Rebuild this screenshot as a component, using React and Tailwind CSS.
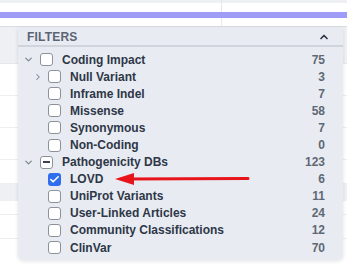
import { ChevronDown, ChevronRight, ChevronUp, Check } from "lucide-react";

const rows = [
  { label: "Coding Impact", count: 75, level: 0, caret: "down" },
  { label: "Null Variant", count: 3, level: 1, caret: "right" },
  { label: "Inframe Indel", count: 7, level: 1 },
  { label: "Missense", count: 58, level: 1 },
  { label: "Synonymous", count: 7, level: 1 },
  { label: "Non-Coding", count: 0, level: 1 },
  { label: "Pathogenicity DBs", count: 123, level: 0, caret: "down", state: "mixed" },
  { label: "LOVD", count: 6, level: 1, state: "checked" },
  { label: "UniProt Variants", count: 11, level: 1 },
  { label: "User-Linked Articles", count: 24, level: 1 },
  { label: "Community Classifications", count: 12, level: 1 },
  { label: "ClinVar", count: 70, level: 1 },
];

const Box = ({ state }) => {
  if (state === "checked")
    return (
      <span className="w-[13px] h-[13px] rounded-[3px] bg-[#2f6fed] flex items-center justify-center">
        <Check className="w-[11px] h-[11px] text-white" strokeWidth={3.5} />
      </span>
    );
  return (
    <span className="w-[13px] h-[13px] rounded-[3px] bg-white border border-[#8d929a] flex items-center justify-center">
      {state === "mixed" && <span className="w-[7px] h-[1.5px] bg-[#3b4250]" />}
    </span>
  );
};

const FilterRow = ({ row }) => (
  <div className="h-[17.1px] flex items-center">
    <div className={row.level === 0 ? "w-[22px] pl-[5px] flex items-center" : "w-[30px] pl-[15px] flex items-center"}>
      {row.caret === "down" && <ChevronDown className="w-[11px] h-[11px] text-[#7a818b]" strokeWidth={2.5} />}
      {row.caret === "right" && <ChevronRight className="w-[10px] h-[10px] text-[#7a818b]" strokeWidth={2.5} />}
    </div>
    <Box state={row.state} />
    <span className="ml-[9px] flex-1 text-[12px] font-bold text-[#2e3747] leading-none">{row.label}</span>
    <span className="text-[12px] font-bold text-[#606874] leading-none">{row.count}</span>
  </div>
);

export default function App() {
  return (
    <div className="relative w-[347px] h-[270px] overflow-hidden bg-white font-['Liberation_Sans',Arial,sans-serif]">
      {/* table behind */}
      <div className="flex flex-col">
        <div className="h-[3px] bg-[#eef0f3] flex"><div className="w-[222px] border-r border-[#e2e5ea]" /></div>
        <div className="h-[9px] flex"><div className="w-[222px] border-r border-[#e6e8ec]" /></div>
        <div className="h-[6px] bg-[#9f9cf7]" />
        <div className="h-[9px] flex border-b border-[#d9dde3]"><div className="w-[222px] border-r border-[#e6e8ec]" /></div>
        <div className="h-[37px] bg-[#eef0f4] border-b border-[#e4e7ec]" />
        <div className="h-[32px] border-b border-[#eceef1]" />
        <div className="h-[32px] border-b border-[#eceef1]" />
        <div className="h-[32px] border-b border-[#eceef1]" />
        <div className="h-[24px] border-b border-[#eceef1]" />
        <div className="h-[17px] bg-[#eef0f4]" />
        <div className="h-[14px] border-b border-[#eceef1]" />
        <div className="h-[24px] flex border-b border-[#eceef1]"><div className="w-[222px] border-r border-[#e6e8ec]" /></div>
      </div>

      {/* filter dropdown */}
      <div className="absolute left-[18px] top-[28px] w-[325px] h-[232px] bg-[#e8ecf2] rounded-b-[5px] shadow-[0_1px_4px_rgba(0,0,0,0.12)]">
        <div className="h-[19px] flex items-center justify-between pl-[9px] pr-[13px] border-b-2 border-[#d0d5dd]">
          <span className="text-[12px] font-bold text-[#5b6472] tracking-[0.2px]">FILTERS</span>
          <ChevronUp className="w-[12px] h-[12px] text-[#2e3747]" strokeWidth={3.5} />
        </div>
        <div className="pt-[4px] pr-[18px]">
          {rows.map((row) => (
            <FilterRow key={row.label} row={row} />
          ))}
        </div>
      </div>

      {/* red arrow */}
      <svg className="absolute left-0 top-0" width="347" height="270">
        <line x1="128" y1="179" x2="248" y2="178.5" stroke="#e8141b" strokeWidth="3" strokeLinecap="round" />
        <polygon points="115,179 134,173 134,185" fill="#e8141b" />
      </svg>
    </div>
  );
}
